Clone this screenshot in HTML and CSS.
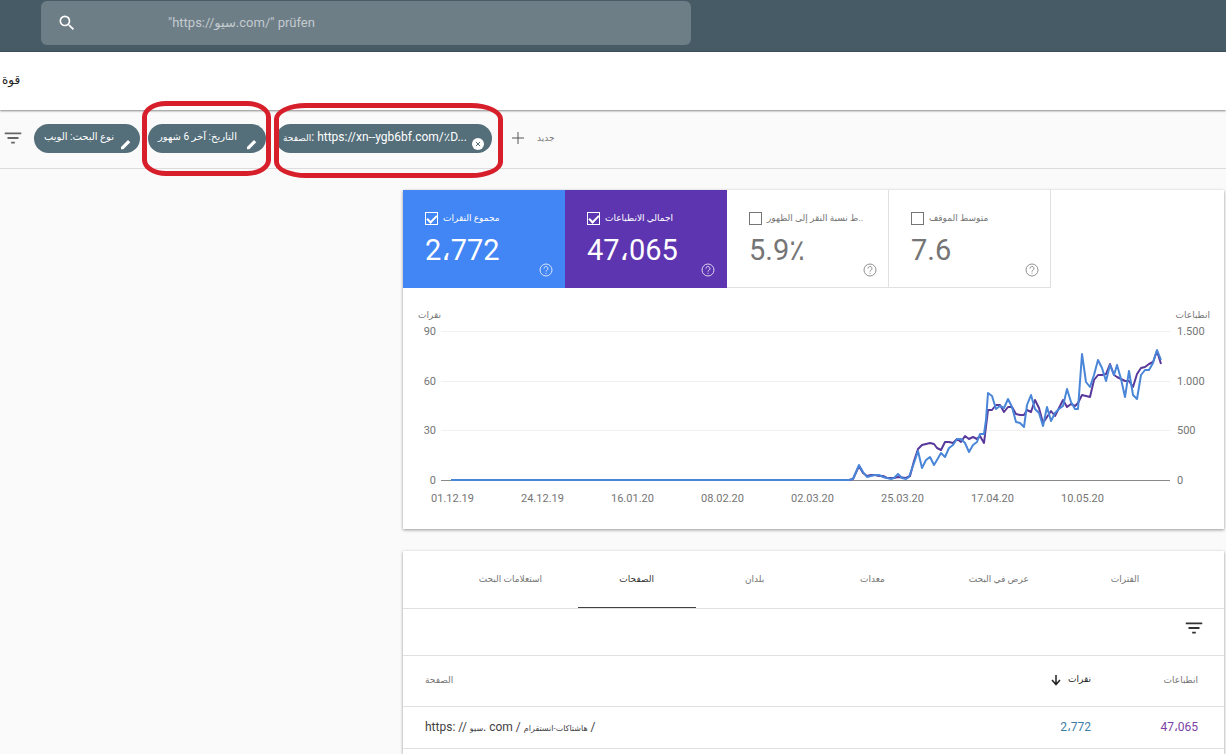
FILE: index.html
```html
<!DOCTYPE html>
<html lang="ar" dir="ltr">
  <head>
    <meta charset="utf-8">
    <meta name="viewport" content="width=device-width, initial-scale=1">
    <title>Search performance</title>
    <link rel="stylesheet" href="styles.css">
  </head>
  <body>
    <header class="topbar">
      <form class="search">
        <svg class="search-icon" viewBox="0 0 24 24" aria-hidden="true"><path d="M15.5 14h-.79l-.28-.27A6.47 6.47 0 0 0 16 9.5 6.5 6.5 0 1 0 9.5 16c1.61 0 3.09-.59 4.23-1.57l.27.28v.79l5 4.99L20.49 19l-4.99-5zm-6 0C7.01 14 5 11.99 5 9.5S7.01 5 9.5 5 14 7.01 14 9.5 11.99 14 9.5 14z"/></svg>
        <input class="search-input" type="text" aria-label="URL" placeholder="&quot;https://سيو.com/&quot; prüfen">
      </form>
    </header>

    <div class="titlebar">
      <h1 class="title">قوة</h1>
    </div>

    <div class="filters">
      <svg class="filter-icon" viewBox="0 0 24 24" aria-hidden="true"><path d="M10 18h4v-2h-4v2zM3 6v2h18V6H3zm3 7h12v-2H6v2z"/></svg>
      <button class="chip chip-type" type="button">
        <span class="chip-text" dir="rtl">نوع البحث: الويب</span>
        <svg class="chip-icon" viewBox="0 0 12 12" aria-hidden="true"><path d="M1 9l7-7 2.300 2.300-7 7H1z"/></svg>
      </button>
      <div class="marked marked-date">
        <button class="chip chip-date" type="button">
          <span class="chip-text" dir="rtl">التاريخ: آخر 6 شهور</span>
          <svg class="chip-icon" viewBox="0 0 12 12" aria-hidden="true"><path d="M1 9l7-7 2.300 2.300-7 7H1z"/></svg>
        </button>
      </div>
      <div class="marked marked-page">
        <button class="chip chip-page" type="button">
          <span class="chip-text"><span class="ar">الصفحة</span>: https://xn--ygb6bf.com/٪D...</span>
          <svg class="chip-icon" viewBox="0 0 12 12" aria-hidden="true"><circle cx="6" cy="6" r="6"/><path class="chip-cross" d="M4 4l4 4M8 4l-4 4"/></svg>
        </button>
      </div>
      <button class="add-filter" type="button">
        <svg class="add-icon" viewBox="0 0 14 14" aria-hidden="true"><path d="M7 1v12M1 7h12"/></svg>
        <span>جديد</span>
      </button>
    </div>

    <main class="content">
      <section class="card">
        <div class="metrics">
          <div class="metric metric-clicks">
            <label class="metric-label"><input class="check" type="checkbox" checked><span class="metric-name" dir="rtl">مجموع النقرات</span></label>
            <div class="metric-value">2،772</div>
            <svg class="help" viewBox="0 0 14 14" aria-hidden="true"><circle cx="7" cy="7" r="6"/><path d="M5 5.600a2 2 0 1 1 3 1.600c-.7.400-1 .700-1 1.400M7 9.800v1"/></svg>
          </div>
          <div class="metric metric-impressions">
            <label class="metric-label"><input class="check" type="checkbox" checked><span class="metric-name" dir="rtl">اجمالي الانطباعات</span></label>
            <div class="metric-value">47،065</div>
            <svg class="help" viewBox="0 0 14 14" aria-hidden="true"><circle cx="7" cy="7" r="6"/><path d="M5 5.600a2 2 0 1 1 3 1.600c-.7.400-1 .700-1 1.400M7 9.800v1"/></svg>
          </div>
          <div class="metric">
            <label class="metric-label"><input class="check" type="checkbox"><span class="metric-name" dir="rtl">..ط نسبة النقر إلى الظهور</span></label>
            <div class="metric-value">5.9٪</div>
            <svg class="help" viewBox="0 0 14 14" aria-hidden="true"><circle cx="7" cy="7" r="6"/><path d="M5 5.600a2 2 0 1 1 3 1.600c-.7.400-1 .700-1 1.400M7 9.800v1"/></svg>
          </div>
          <div class="metric">
            <label class="metric-label"><input class="check" type="checkbox"><span class="metric-name" dir="rtl">متوسط الموقف</span></label>
            <div class="metric-value">7.6</div>
            <svg class="help" viewBox="0 0 14 14" aria-hidden="true"><circle cx="7" cy="7" r="6"/><path d="M5 5.600a2 2 0 1 1 3 1.600c-.7.400-1 .700-1 1.400M7 9.800v1"/></svg>
          </div>
        </div>

        <div class="chart">
          <div class="axis-title">نقرات</div>
          <div></div>
          <div class="axis-title">انطباعات</div>
          <div class="axis axis-left"><span>90</span><span>60</span><span>30</span><span>0</span></div>
          <svg class="plot" viewBox="0 0 729 150" preserveAspectRatio="none" aria-hidden="true">
            <path class="grid-line" d="M0 .5H729M0 50.500H729M0 99.500H729"/>
            <path class="base-line" d="M0 149.500H729"/>
            <polyline class="line line-impressions" points="10,149 408,149 412,148 418,135 422,142 426,145 430,144 434,144 438,145 442,145 446,147 453,147 457,146 465,147 469,145 473,130 477,118 481,114 485,113 489,112 493,113 496,117 500,119 504,111 508,111 512,112 516,108 520,111 524,105 528,108 532,106 536,108 539,105 543,112 547,79 551,79 555,74 559,74 563,81 567,76 571,76 575,83 579,84 583,84 586,79 590,81 594,69 598,77 602,92 606,86 610,80 614,85 618,77 622,69 626,76 630,73 634,75 637,72 641,64 645,65 649,66 653,49 657,44 661,44 665,43 669,33 673,44 676,46 680,48 684,50 688,50 692,56 696,43 700,37 704,36 708,33 712,31 716,20 720,33"/>
            <polyline class="line line-clicks" points="10,149 408,149 412,148 418,134 422,141 426,146 430,145 434,144 438,144 442,146 446,147 450,148 453,147 457,143 461,147 465,148 468,146 473,132 477,120 481,137 485,129 489,126 493,134 496,129 500,122 504,126 508,117 512,114 516,108 520,108 524,112 528,121 532,114 536,111 539,103 543,103 545,89 547,62 551,65 555,78 559,75 563,77 567,68 571,76 575,91 579,92 583,96 586,74 590,64 594,78 598,82 602,95 606,76 610,90 614,82 618,78 622,75 626,58 630,71 634,78 637,78 641,23 645,51 649,56 653,44 657,29 661,37 665,50 669,34 673,44 676,34 680,48 684,66 688,40 692,64 696,68 700,44 704,39 708,39 712,32 716,19 720,29"/>
          </svg>
          <div class="axis axis-right"><span>1.500</span><span>1.000</span><span>500</span><span>0</span></div>
          <div class="dates"><span>01.12.19</span><span>24.12.19</span><span>16.01.20</span><span>08.02.20</span><span>02.03.20</span><span>25.03.20</span><span>17.04.20</span><span>10.05.20</span></div>
        </div>
      </section>

      <section class="card card-table">
        <nav class="tabs">
          <a class="tab tab-wide" href="#queries">استعلامات البحث</a>
          <a class="tab active" href="#pages">الصفحات</a>
          <a class="tab" href="#countries">بلدان</a>
          <a class="tab" href="#devices">معدات</a>
          <a class="tab tab-wide" href="#appearance">عرض في البحث</a>
          <a class="tab" href="#dates">الفترات</a>
        </nav>
        <div class="toolbar">
          <button class="icon-btn" type="button" aria-label="Filter">
            <svg viewBox="0 0 24 24" aria-hidden="true"><path d="M10 18h4v-2h-4v2zM3 6v2h18V6H3zm3 7h12v-2H6v2z"/></svg>
          </button>
        </div>
        <table class="pages">
          <thead>
            <tr>
              <th class="col-page">الصفحة</th>
              <th class="col-clicks sorted"><svg class="sort-icon" viewBox="0 0 12 12" aria-hidden="true"><path d="M6 1v9M2 6l4 4.500L10 6"/></svg>نقرات</th>
              <th class="col-impressions">انطباعات</th>
            </tr>
          </thead>
          <tbody>
            <tr>
              <td class="col-page">https: // <span class="ar">سيو</span>. com / <span class="ar">هاشتاكات-انستقرام</span> /</td>
              <td class="col-clicks">2،772</td>
              <td class="col-impressions">47،065</td>
            </tr>
          </tbody>
        </table>
      </section>
    </main>
  </body>
</html>
```
FILE: styles.css
```css
* {
  box-sizing: border-box;
}
body {
  margin: 0;
  min-height: 100vh;
  display: flex;
  flex-direction: column;
  background-color: #fafafa;
  color: #424242;
  font-family: Roboto, "DejaVu Sans", sans-serif;
  font-size: 12px;
}
button,
input {
  font-family: inherit;
}
.topbar {
  height: 52px;
  padding: 1px 41px 0;
  background-color: #475b67;
  border-bottom: 1px solid #3c505c;
}
.search {
  display: flex;
  align-items: center;
  max-width: 650px;
  height: 44px;
  padding-left: 16px;
  border-radius: 6px;
  background-color: #6e7e87;
}
.search-icon {
  width: 20px;
  height: 20px;
  fill: #fff;
}
.search-input {
  flex: 1;
  padding: 0 0 2px 91px;
  border: none;
  outline: none;
  background: none;
  color: #fff;
  font-size: 13px;
}
.search-input::placeholder {
  color: #c3cbcf;
}
.titlebar {
  display: flex;
  align-items: center;
  height: 58px;
  padding: 0 2px 2px;
  background-color: #fff;
  box-shadow: 0 1px 2px rgba(0, 0, 0, 0.45);
}
.title {
  margin: 0;
  color: #222;
  font-size: 12px;
  font-weight: 500;
}
.filters {
  display: flex;
  align-items: center;
  height: 59px;
  padding: 0 2px 2px;
  border-bottom: 1px solid #dcdcdc;
}
.filter-icon {
  width: 22px;
  height: 22px;
  margin-right: 10px;
  fill: #666;
}
.chip {
  display: flex;
  align-items: center;
  justify-content: space-between;
  height: 29px;
  padding: 0 8px 3px 10px;
  border: none;
  border-radius: 15px;
  background-color: #546e7a;
  color: #fff;
  font-size: 10px;
  cursor: pointer;
}
.chip-type {
  width: 106px;
  margin-right: 8px;
}
.chip-date {
  width: 118px;
}
.chip-page {
  width: 216px;
  padding-left: 7px;
  font-size: 12px;
}
.chip-page .ar {
  font-size: 9px;
}
.chip-text {
  white-space: nowrap;
}
.chip-icon {
  width: 12px;
  height: 12px;
  align-self: flex-end;
  fill: #fff;
}
.chip-cross {
  fill: none;
  stroke: #546e7a;
}
.marked {
  position: relative;
}
.marked::after {
  content: "";
  position: absolute;
  border: 5px solid #d71f2b;
  border-radius: 24px / 16px;
  pointer-events: none;
}
.marked-date {
  margin-right: 10px;
}
.marked-date::after {
  inset: -23px -5px -23px -6px;
}
.marked-page::after {
  inset: -21px -11px -25px -2px;
  border-radius: 32px / 16px;
}
.add-filter {
  display: flex;
  align-items: center;
  gap: 12px;
  margin-left: 19px;
  padding: 0;
  border: none;
  background: none;
  color: #777;
  font-size: 9px;
  cursor: pointer;
}
.add-icon {
  width: 14px;
  height: 14px;
  stroke: #555;
}
.content {
  flex: 1;
  display: flex;
  flex-direction: column;
  gap: 22px;
  padding: 21px 2px 0 403px;
}
.card {
  background-color: #fff;
  box-shadow: 0 1px 3px rgba(0, 0, 0, 0.4);
}
.card-table {
  flex: 1;
}
.metrics {
  display: flex;
  padding-right: 173px;
}
.metric {
  flex: 1;
  position: relative;
  min-width: 0;
  height: 98px;
  padding: 20px 22px 0;
  border-right: 1px solid #e0e0e0;
  border-bottom: 1px solid #e0e0e0;
  color: #757575;
}
.metric-clicks {
  background-color: #4285f4;
  border-color: #4285f4;
  color: #fff;
}
.metric-impressions {
  background-color: #5e35b1;
  border-color: #5e35b1;
  color: #fff;
}
.metric-label {
  display: flex;
  align-items: center;
  gap: 5px;
  height: 16px;
  font-size: 9px;
  white-space: nowrap;
}
.check {
  appearance: none;
  flex: none;
  display: grid;
  place-items: center;
  width: 13px;
  height: 13px;
  margin: 0;
  border: 1px solid currentColor;
  color: inherit;
}
.check:checked::after {
  content: "";
  width: 8px;
  height: 4px;
  border: solid currentColor;
  border-width: 0 0 2px 2px;
  transform: rotate(-45deg);
}
.metric-value {
  margin-top: 6px;
  font-size: 29px;
  line-height: 36px;
}
.help {
  position: absolute;
  right: 11px;
  bottom: 10px;
  width: 14px;
  height: 14px;
  fill: none;
  stroke: currentColor;
  opacity: 0.8;
}
.chart {
  display: grid;
  grid-template-columns: 38px 1fr 54px;
  padding-top: 20px;
  color: #757575;
  font-size: 11px;
}
.axis-title {
  height: 23px;
  font-size: 9px;
  line-height: 14px;
  text-align: right;
  white-space: nowrap;
}
.axis-title:nth-child(3) {
  padding-right: 14px;
}
.axis {
  display: flex;
  flex-direction: column;
  justify-content: space-between;
  height: 161px;
  margin-top: -5px;
  line-height: 12px;
}
.axis-left {
  padding-right: 5px;
  text-align: right;
}
.axis-right {
  padding-left: 7px;
}
.plot {
  width: 100%;
  height: 150px;
  overflow: visible;
}
.grid-line {
  stroke: #f0f0f0;
}
.base-line {
  stroke: #8a8a8a;
}
.line {
  fill: none;
  stroke-width: 2;
  stroke-linejoin: round;
}
.line-impressions {
  stroke: #57399b;
}
.line-clicks {
  stroke: #4a86d8;
}
.dates {
  grid-column: 1 / -1;
  display: flex;
  justify-content: space-between;
  height: 42px;
  padding: 5px 120px 0 28px;
  line-height: 14px;
}
.tabs {
  display: flex;
  height: 58px;
  padding: 0 40px;
  border-bottom: 1px solid #e0e0e0;
}
.tab {
  flex: 7;
  display: flex;
  align-items: center;
  justify-content: center;
  padding-bottom: 2px;
  color: #757575;
  font-size: 9px;
  text-decoration: none;
}
.tab-wide {
  flex: 8;
}
.tab.active {
  color: #333;
  font-weight: 500;
  box-shadow: inset 0 -1px #424242;
}
.toolbar {
  display: flex;
  justify-content: flex-end;
  height: 47px;
  padding: 8px 19px 0 0;
  border-bottom: 1px solid #e0e0e0;
}
.icon-btn {
  width: 22px;
  height: 22px;
  padding: 0;
  border: none;
  background: none;
  fill: #333;
  cursor: pointer;
}
.pages {
  width: 100%;
  border-collapse: collapse;
}
.pages th {
  height: 50px;
  padding: 0 0 2px;
  border-bottom: 1px solid #e0e0e0;
  color: #757575;
  font-size: 9px;
  font-weight: 400;
  text-align: right;
}
.pages td {
  height: 42px;
  padding: 0;
  border-bottom: 1px solid #e0e0e0;
  text-align: right;
}
.pages td .ar {
  font-size: 8px;
}
.pages .col-page {
  padding-left: 22px;
  text-align: left;
}
.pages .sorted {
  color: #222;
}
.pages .col-impressions {
  width: 133px;
  padding-right: 26px;
}
.sort-icon {
  width: 12px;
  height: 12px;
  margin-right: 6px;
  vertical-align: middle;
  fill: none;
  stroke: #222;
  stroke-width: 1.5;
}
td.col-clicks {
  color: #3d7ea6;
}
td.col-impressions {
  color: #7b3fa5;
}
```
